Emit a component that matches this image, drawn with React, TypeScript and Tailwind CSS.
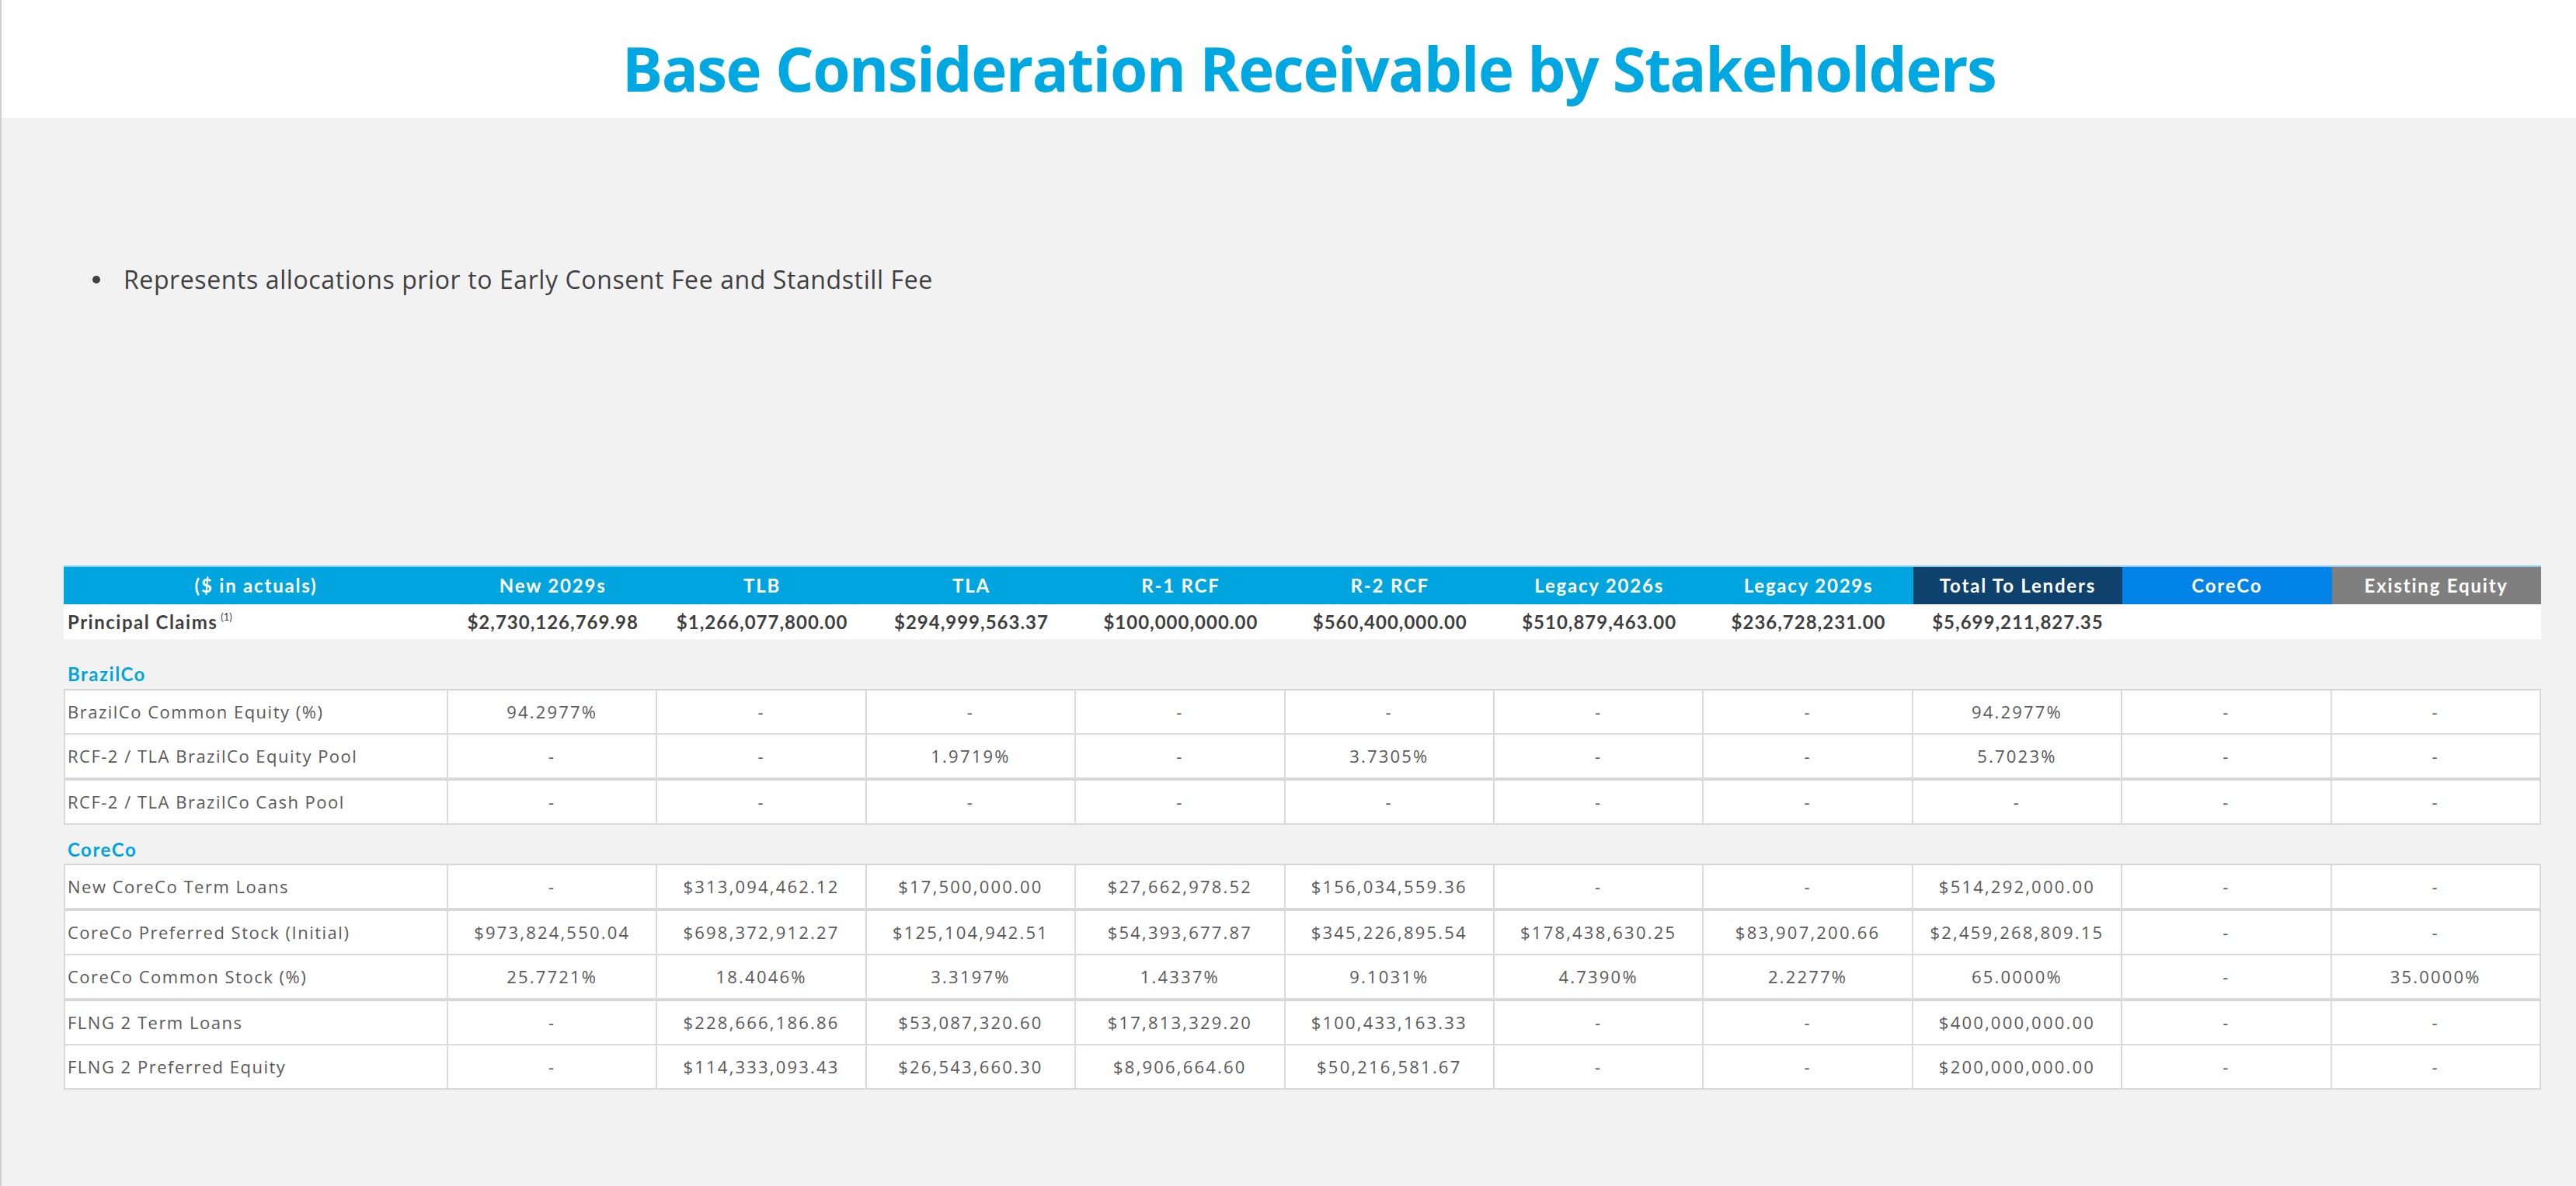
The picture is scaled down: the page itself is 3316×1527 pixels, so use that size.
import React from "react";

const headers = [
  { label: "($ in actuals)", bg: "bg-[#00a5df]" },
  { label: "New 2029s", bg: "bg-[#00a5df]" },
  { label: "TLB", bg: "bg-[#00a5df]" },
  { label: "TLA", bg: "bg-[#00a5df]" },
  { label: "R-1 RCF", bg: "bg-[#00a5df]" },
  { label: "R-2 RCF", bg: "bg-[#00a5df]" },
  { label: "Legacy 2026s", bg: "bg-[#00a5df]" },
  { label: "Legacy 2029s", bg: "bg-[#00a5df]" },
  { label: "Total To Lenders", bg: "bg-[#0e416b]" },
  { label: "CoreCo", bg: "bg-[#0082e6]" },
  { label: "Existing Equity", bg: "bg-[#7f7f7f]" },
];

const principal = [
  "$2,730,126,769.98",
  "$1,266,077,800.00",
  "$294,999,563.37",
  "$100,000,000.00",
  "$560,400,000.00",
  "$510,879,463.00",
  "$236,728,231.00",
  "$5,699,211,827.35",
  "",
  "",
];

type Row = { label: string; values: string[]; thick?: boolean };

const brazilRows: Row[] = [
  { label: "BrazilCo Common Equity (%)", values: ["94.2977%", "-", "-", "-", "-", "-", "-", "94.2977%", "-", "-"] },
  { label: "RCF-2 / TLA BrazilCo Equity Pool", values: ["-", "-", "1.9719%", "-", "3.7305%", "-", "-", "5.7023%", "-", "-"] },
  { label: "RCF-2 / TLA BrazilCo Cash Pool", values: ["-", "-", "-", "-", "-", "-", "-", "-", "-", "-"], thick: true },
];

const corecoRows: Row[] = [
  { label: "New CoreCo Term Loans", values: ["-", "$313,094,462.12", "$17,500,000.00", "$27,662,978.52", "$156,034,559.36", "-", "-", "$514,292,000.00", "-", "-"] },
  { label: "CoreCo Preferred Stock (Initial)", values: ["$973,824,550.04", "$698,372,912.27", "$125,104,942.51", "$54,393,677.87", "$345,226,895.54", "$178,438,630.25", "$83,907,200.66", "$2,459,268,809.15", "-", "-"], thick: true },
  { label: "CoreCo Common Stock (%)", values: ["25.7721%", "18.4046%", "3.3197%", "1.4337%", "9.1031%", "4.7390%", "2.2277%", "65.0000%", "-", "35.0000%"] },
  { label: "FLNG 2 Term Loans", values: ["-", "$228,666,186.86", "$53,087,320.60", "$17,813,329.20", "$100,433,163.33", "-", "-", "$400,000,000.00", "-", "-"], thick: true },
  { label: "FLNG 2 Preferred Equity", values: ["-", "$114,333,093.43", "$26,543,660.30", "$8,906,664.60", "$50,216,581.67", "-", "-", "$200,000,000.00", "-", "-"] },
];

const cols = "grid grid-cols-[495px_repeat(10,269.4px)]";

function DataTable({ rows }: { rows: Row[] }) {
  return (
    <div className="border-t-2 border-[#d6d6d6]">
      {rows.map((row) => (
        <div
          key={row.label}
          className={`${cols} border-b-2 border-[#dadada] bg-white ${row.thick ? "h-[59px] border-t-2 border-t-[#d6d6d6]" : "h-[57px]"}`}
        >
          <div className="flex items-center border-x-2 border-[#dadada] pl-[3px] tracking-[1.5px]">{row.label}</div>
          {row.values.map((v, i) => (
            <div key={i} className="flex items-center justify-center border-r-2 border-[#dadada] tracking-[2.2px]">
              {v}
            </div>
          ))}
        </div>
      ))}
    </div>
  );
}

export default function App() {
  return (
    <div className="min-h-[1527px] w-[3316px] border-l-2 border-[#cfcfcf] bg-[#f2f2f2] font-['Open_Sans',sans-serif]">
      {/* Title band */}
      <div className="flex h-[152px] items-center justify-center bg-white pl-[52px] pt-[24px]">
        <h1 className="text-[78px] font-bold tracking-[-1.5px] text-[#00a8e1]">
          Base Consideration Receivable by Stakeholders
        </h1>
      </div>

      {/* Note */}
      <div className="ml-[117px] mt-[186px] flex h-[44px] items-center text-[32px] tracking-[0.6px] text-[#404040]">
        <span className="mr-[30px] h-[10px] w-[10px] rounded-full bg-[#404040]" />
        <span>Represents allocations prior to Early Consent Fee and Standstill Fee</span>
      </div>

      {/* Table */}
      <div className="ml-[80px] mt-[346px] w-[3189px] text-[22px] text-[#595959]">
        <div className={`${cols} h-[50px] border-t-2 border-[#8fcdea] font-['Lato',sans-serif] text-[24px] font-bold tracking-[1.8px] text-white`}>
          {headers.map((h) => (
            <div key={h.label} className={`flex items-center justify-center ${h.bg}`}>
              {h.label}
            </div>
          ))}
        </div>
        <div className={`${cols} h-[45px] bg-white font-['Lato',sans-serif] font-bold text-[#3f3f3f]`}>
          <div className="flex items-center pl-[5px] text-[24px] tracking-[1.5px]">
            Principal Claims
            <sup className="ml-[4px] text-[13px] font-normal tracking-normal">(1)</sup>
          </div>
          {principal.map((p, i) => (
            <div key={i} className="flex items-center justify-center text-[24px] tracking-[1px]">
              {p}
            </div>
          ))}
        </div>

        <div className="h-[64px] pl-[5px] pt-[27px] font-['Lato',sans-serif] text-[24px] font-bold leading-[36px] tracking-[1.5px] text-[#00a5df]">
          BrazilCo
        </div>
        <DataTable rows={brazilRows} />

        <div className="h-[50px] pl-[5px] pt-[14px] font-['Lato',sans-serif] text-[24px] font-bold leading-[36px] tracking-[1.5px] text-[#00a5df]">
          CoreCo
        </div>
        <DataTable rows={corecoRows} />
      </div>
    </div>
  );
}
